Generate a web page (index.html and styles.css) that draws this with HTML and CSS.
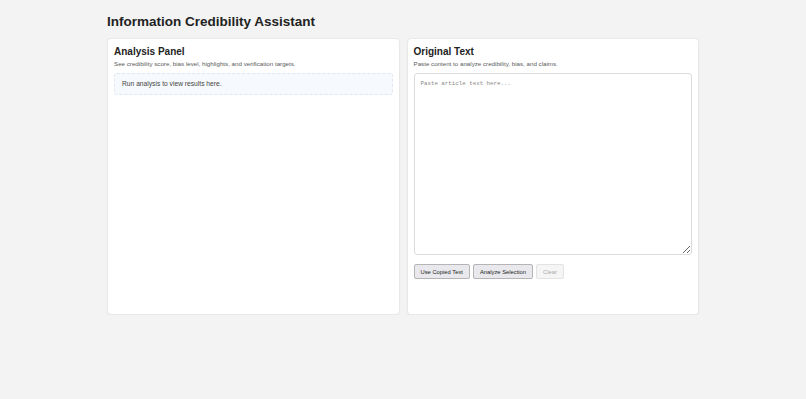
FILE: index.html
```html
<!DOCTYPE html>
<html lang="en">
<head>
    <meta charset="UTF-8">
    <meta name="viewport" content="width=device-width, initial-scale=1.0">
    <title>Information Credibility Assistant</title>
    <link rel="stylesheet" href="styles.css">
</head>
<body>
    <div class="app">
        <h1>Information Credibility Assistant</h1>
        <div class="panels">
            <section class="panel">
                <h2>Analysis Panel</h2>
                <p class="hint">See credibility score, bias level, highlights, and verification targets.</p>
                <div class="empty">Run analysis to view results here.</div>
            </section>
            <section class="panel">
                <h2>Original Text</h2>
                <p class="hint">Paste content to analyze credibility, bias, and claims.</p>
                <textarea id="source" placeholder="Paste article text here..."></textarea>
                <div class="actions">
                    <button>Use Copied Text</button>
                    <button>Analyze Selection</button>
                    <button disabled>Clear</button>
                </div>
            </section>
        </div>
    </div>
</body>
</html>
```

FILE: styles.css
```css
body {
    margin: 0;
    font-family: "Liberation Sans", Arial, sans-serif;
    background-color: #f3f3f3;
    color: #222;
}
.app {
    width: 592px;
    margin: 0 auto;
    padding-top: 14px;
}
h1 {
    font-size: 13.5px;
    margin: 0 0 8px 0;
    line-height: 16px;
}
.panels {
    display: grid;
    grid-template-columns: 1fr 1fr;
    gap: 7px;
}
.panel {
    background: white;
    border: 1px solid #e8e8e8;
    border-radius: 4px;
    box-shadow: 0 1px 2px rgba(0,0,0,0.04);
    padding: 7px 6px 6px 6px;
    min-height: 262px;
}
h2 {
    font-size: 10px;
    margin: 0;
    line-height: 12px;
}
.hint {
    font-size: 6.2px;
    color: #5a5a5a;
    margin: 2px 0 5px 0;
    line-height: 8px;
}
.empty {
    background: #f6f9fd;
    border: 1px dashed #e0e7ef;
    border-radius: 3px;
    padding: 6px 7px;
    font-size: 6.7px;
    color: #444;
    line-height: 8px;
}
textarea {
    display: block;
    box-sizing: border-box;
    width: 100%;
    height: 182px;
    border: 1px solid #dcdcdc;
    border-radius: 3px;
    padding: 6px;
    font-family: "Liberation Mono", monospace;
    font-size: 5.8px;
    resize: vertical;
}
textarea::placeholder {
    color: #888;
}
.actions {
    display: flex;
    gap: 3px;
    margin-top: 9px;
}
button {
    font-family: "Liberation Sans", Arial, sans-serif;
    font-size: 5.8px;
    height: 15px;
    padding: 0 6px;
    background: #e9e9ed;
    border: 1px solid #b5b5b8;
    border-radius: 2px;
    color: #222;
}
button:disabled {
    background: #f5f5f6;
    border-color: #e2e2e4;
    color: #aaa;
}
```
